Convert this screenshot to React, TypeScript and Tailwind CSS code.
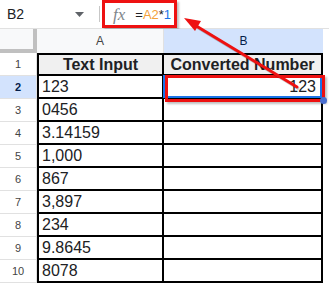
import React from "react";

const rows: { a: string; b: string }[] = [
  { a: "123", b: "123" },
  { a: "0456", b: "" },
  { a: "3.14159", b: "" },
  { a: "1,000", b: "" },
  { a: "867", b: "" },
  { a: "3,897", b: "" },
  { a: "234", b: "" },
  { a: "9.8645", b: "" },
  { a: "8078", b: "" },
];

export default function App() {
  return (
    <div className="relative w-[329px] h-[285px] bg-white overflow-hidden font-['Liberation_Sans',Arial,sans-serif] text-[#202124]">
      {/* formula bar */}
      <div className="flex h-[28px] items-center">
        <div className="flex w-[99px] items-center justify-between pl-[7px] pr-[15px]">
          <span className="text-[14px] leading-none">B2</span>
          <svg width="9" height="5" viewBox="0 0 9 5">
            <path d="M0 0 L9 0 L4.5 5 Z" fill="#5f6368" />
          </svg>
        </div>
        <div className="h-[16px] w-px bg-[#c7c7c7]" />
        <div className="ml-[2px] flex h-[28px] w-[75px] items-center border-[3px] border-[#ee1111] pl-[8px] shadow-[2px_2px_2px_rgba(0,0,0,0.25)]">
          <span className="font-['Liberation_Serif',serif] text-[17px] italic leading-none text-[#80868b]">fx</span>
          <span className="ml-[10px] text-[13px] leading-none">
            =<span className="text-[#f4a13a]">A2</span>*<span className="text-[#1a73e8]">1</span>
          </span>
        </div>
      </div>

      {/* sheet */}
      <div className="grid grid-cols-[37px_127px_159px_6px] grid-rows-[24px_repeat(10,23px)] border-t border-[#e1e1e1]">
        {/* header row */}
        <div className="border-r-4 border-b-4 border-[#c0c0c0] bg-[#f8f9fa]" />
        <div className="flex items-center justify-center border-r border-[#e1e1e1] bg-[#f8f9fa] text-[12px] text-[#444]">A</div>
        <div className="flex items-center justify-center bg-[#d3e3fd] text-[12px] text-[#041e49]">B</div>
        <div className="bg-white" />

        {/* row 1 */}
        <div className="flex items-center justify-center border-b border-r border-[#e1e1e1] bg-white text-[11px] text-[#444]">1</div>
        <div className="flex items-center justify-center border-2 border-black bg-[#f0f0f0] text-[16px] font-bold">Text Input</div>
        <div className="flex items-center justify-center border-y-2 border-r-2 border-black bg-[#f0f0f0] text-[16px] font-bold">Converted Number</div>
        <div />

        {rows.map((r, i) => {
          const n = i + 2;
          const sel = n === 2;
          return (
            <React.Fragment key={n}>
              <div
                className={
                  sel
                    ? "flex items-center justify-center border-b border-r border-[#e1e1e1] bg-[#d3e3fd] text-[11px] font-bold text-[#041e49]"
                    : "flex items-center justify-center border-b border-r border-[#e1e1e1] bg-white text-[11px] text-[#444]"
                }
              >
                {n}
              </div>
              <div className="flex items-center border-x-2 border-b-2 border-black pl-[3px] text-[16px]">{r.a}</div>
              <div
                className={
                  sel
                    ? "relative flex items-center justify-end border-b-2 border-r-2 border-black pr-[5px] text-[16px]"
                    : "flex items-center justify-end border-b-2 border-r-2 border-black pr-[5px] text-[16px]"
                }
              >
                {sel && <div className="absolute inset-[-1px] border-2 border-[#1a73e8]" />}
                <span className="relative">{r.b}</span>
              </div>
              <div />
            </React.Fragment>
          );
        })}
      </div>

      {/* annotation: red box around B2 */}
      <div className="absolute left-[165px] top-[75px] h-[27px] w-[160px] border-[3px] border-[#ee1111] shadow-[2px_2px_2px_rgba(0,0,0,0.25)]" />
      <div className="absolute left-[320px] top-[97px] h-[7px] w-[7px] rounded-full bg-[#4a6fd0]" />

      {/* annotation arrow */}
      <svg className="absolute left-0 top-0" width="329" height="285" viewBox="0 0 329 285">
        <line x1="299" y1="89" x2="195" y2="26" stroke="rgba(0,0,0,0.2)" strokeWidth="3" />
        <line x1="297" y1="87" x2="193" y2="24" stroke="#ee1111" strokeWidth="3" strokeLinecap="round" />
        <path d="M184 18 L201 21 L195 31 Z" fill="#ee1111" />
      </svg>
    </div>
  );
}
